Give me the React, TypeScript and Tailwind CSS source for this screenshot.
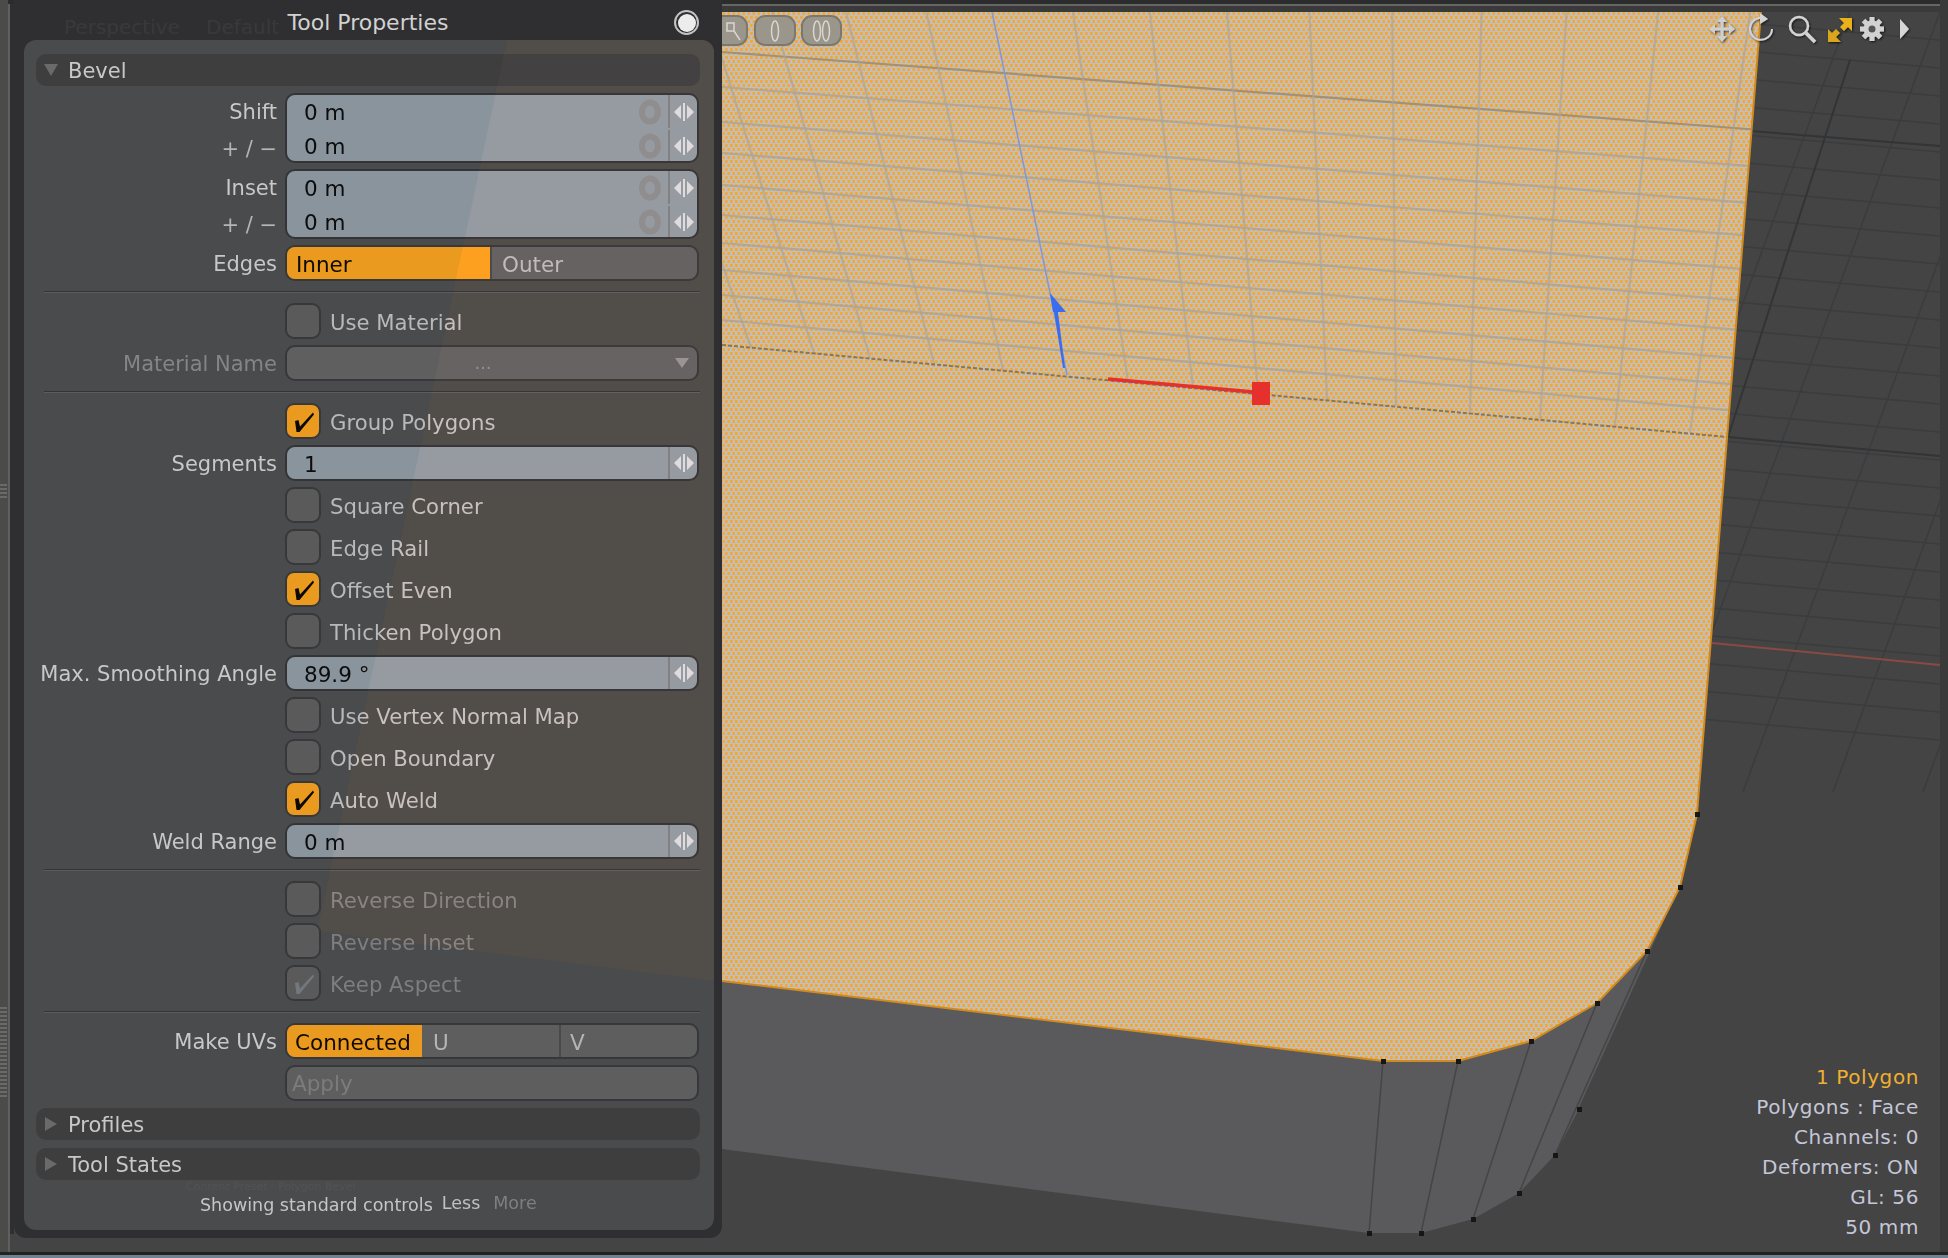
import React from 'react';

const FONT = "font-['DejaVu_Sans',sans-serif]";

const faceEdge =
  '722,12 1761,12 1697,814 1680,887 1647,951 1597,1003 1531,1041 1458,1061 1383,1061 722,981';
const sideFace =
  '722,981 1383,1061 1458,1061 1531,1041 1597,1003 1647,951 1680,887 1579,1109 1555,1155 1519,1193 1473,1219 1421,1233 1369,1233 722,1149';

const faceRows = [87, 122, 153, 185, 215, 243, 270, 295, 320];
const faceCols = [751, 814, 870, 934, 1003, 1128, 1193, 1258, 1327, 1396, 1470, 1540, 1615, 1690];
const sideEdges = [
  [1383, 1061, 1369, 1233],
  [1458, 1061, 1421, 1233],
  [1531, 1041, 1473, 1219],
  [1597, 1003, 1519, 1193],
  [1647, 951, 1555, 1155],
  [1680, 887, 1579, 1109],
];
const verts = [
  [1697, 814], [1680, 887], [1647, 951], [1597, 1003], [1531, 1041], [1458, 1061], [1383, 1061],
  [1579, 1109], [1555, 1155], [1519, 1193], [1473, 1219], [1421, 1233], [1369, 1233],
];
const floorRows = Array.from({ length: 26 }, (_, i) => 40 + i * 28);
const floorCols = [1850, 1940, 2030, 2120, 2210];

const Viewport = () => (
  <svg className="absolute inset-0" width={1948} height={1258} viewBox="0 0 1948 1258">
    <defs>
      <pattern id="dither" width="5" height="8" patternUnits="userSpaceOnUse">
        <rect width="5" height="8" fill="#c2bfba" />
        <rect x="0" y="0" width="2.8" height="3" fill="#f5a733" />
        <rect x="2.5" y="4" width="2.8" height="3" fill="#f5a733" />
      </pattern>
      <clipPath id="faceClip">
        <polygon points={faceEdge} />
      </clipPath>
      <clipPath id="floorClip">
        <rect x="1690" y="12" width="250" height="780" />
      </clipPath>
      <filter id="iconShadow" x="-30%" y="-30%" width="170%" height="170%">
        <feDropShadow dx="1" dy="1" stdDeviation="1" floodColor="#000" floodOpacity="0.75" />
      </filter>
    </defs>

    {/* floor grid */}
    <g clipPath="url(#floorClip)" stroke="#3b3c3e" strokeWidth="1.5">
      {floorRows.map((y) => (
        <line key={y} x1={1690} y1={y - 22} x2={1940} y2={y} />
      ))}
      {floorCols.map((x) => (
        <line key={x} x1={x} y1={12} x2={x - 290} y2={800} />
      ))}
      <line x1={1850} y1={60} x2={1728} y2={437} stroke="#333436" strokeWidth="2" />
      <line x1={1728} y1={437} x2={1940} y2={456} stroke="#333436" strokeWidth="2" />
      <line x1={1750} y1={131} x2={1940} y2={146} stroke="#333436" strokeWidth="2" />
    </g>
    <line x1={1712} y1={643} x2={1940} y2={665} stroke="#8a4a44" strokeWidth="2" />

    {/* object */}
    <polygon points={sideFace} fill="#5a5a5c" />
    {sideEdges.map((e, i) => (
      <line key={i} x1={e[0]} y1={e[1]} x2={e[2]} y2={e[3]} stroke="#454546" strokeWidth="1.5" />
    ))}
    <polygon points={faceEdge} fill="url(#dither)" />
    <g clipPath="url(#faceClip)">
      {faceRows.map((y) => (
        <line
          key={y}
          x1={722}
          y1={y}
          x2={1761}
          y2={y + 1039 * (0.075 + ((y - 52) / 293) * 0.016)}
          stroke="#aaa49a"
          strokeOpacity="0.85"
          strokeWidth="2.2"
        />
      ))}
      <line x1={722} y1={52} x2={1761} y2={130} stroke="#a0927a" strokeWidth="2.2" />
      {faceCols.map((x) => {
        const yb = 345 + (x - 722) * 0.09;
        const tilt = 0.36 - (x - 722) * 0.00052;
        return (
          <line
            key={x}
            x1={x}
            y1={yb}
            x2={x - tilt * (yb - 12)}
            y2={12}
            stroke="#aaa49a"
            strokeOpacity="0.65"
            strokeWidth="2.2"
          />
        );
      })}
      <line x1={722} y1={345} x2={1727} y2={437} stroke="#85775c" strokeWidth="2" strokeDasharray="4 2" />
    </g>
    <polyline
      points="1761,12 1697,814 1680,887 1647,951 1597,1003 1531,1041 1458,1061 1383,1061 722,981"
      fill="none"
      stroke="#cf8a22"
      strokeWidth="2"
    />
    {verts.map((v, i) => (
      <rect key={i} x={v[0] - 2} y={v[1] - 2} width="5" height="5" fill="#161616" />
    ))}

    {/* tool handles */}
    <line x1={992} y1={12} x2={1067} y2={375} stroke="#7d97e0" strokeWidth="1.5" />
    <path d="M1053 305 L1057 305 L1065 368 L1063 368 Z" fill="#3a6cf0" />
    <polygon points="1050,293 1066,312 1053,312" fill="#3a6cf0" />
    <line x1={1108} y1={379} x2={1254} y2={392} stroke="#e6302e" strokeWidth="3.5" />
    <rect x={1252} y={382} width={18} height={23} fill="#e6302e" />

    {/* viewport buttons */}
    <g fill="#9b968c" stroke="#7d786e" strokeWidth="2">
      <rect x={700} y={16} width={47} height={29} rx={10} />
      <rect x={755} y={16} width={40} height={29} rx={10} />
      <rect x={802} y={16} width={39} height={29} rx={10} />
    </g>
    <g fill="none" stroke="#d8d6d0" strokeWidth="1.5">
      <path d="M727 23 l7 0 l0 8 l-7 0 z M734 31 l6 9" />
      <ellipse cx={775} cy={31} rx={3.5} ry={10} />
      <ellipse cx={817} cy={31} rx={3.5} ry={10} />
      <ellipse cx={826} cy={31} rx={3.5} ry={10} />
    </g>

    {/* viewport navigation icons */}
    <g filter="url(#iconShadow)">
      <g fill="#cfcfcf">
        <path d="M1722 16 l5 6 h-10 z M1722 42 l5 -6 h-10 z M1709 29 l6 -5 v10 z M1735 29 l-6 -5 v10 z" />
        <rect x={1720.5} y={20} width={3} height={18} />
        <rect x={1713} y={27.5} width={18} height={3} />
      </g>
      <path d="M1766 19 A11 11 0 1 0 1772 29" fill="none" stroke="#d4d4d4" strokeWidth="2" />
      <path d="M1760 13 l8 6 l-8 5 z" fill="#d4d4d4" />
      <circle cx={1799} cy={26} r={9} fill="none" stroke="#d4d4d4" strokeWidth="2.5" />
      <line x1={1806} y1={33} x2={1815} y2={42} stroke="#d4d4d4" strokeWidth="3.5" />
      <path d="M1852 18 v13 l-4 -4 l-4 4 l-4 -4 l4 -4 l-5 -5 z" fill="#e7b21e" />
      <path d="M1828 42 v-13 l4 4 l4 -4 l4 4 l-4 4 l5 5 z" fill="#d9a51a" />
      <g fill="#d2d2d2">
        <circle cx={1872} cy={29} r={8.5} />
        {[0, 45, 90, 135].map((a) => (
          <rect key={a} x={1869.5} y={17} width={5} height={24} transform={`rotate(${a} 1872 29)`} />
        ))}
      </g>
      <circle cx={1872} cy={29} r={3.5} fill="#555" />
      <path d="M1900 19 l9 10 l-9 10 z" fill="#d6d6d6" />
    </g>
  </svg>
);

const Label = ({ children, dim }: { children?: React.ReactNode; dim?: boolean }) => (
  <div className={`w-[241px] shrink-0 whitespace-nowrap flex justify-end text-[21px] leading-none pt-[3px] ${dim ? 'text-[#858585]' : 'text-[#c8c8c8]'}`}>
    {children}
  </div>
);

const Stepper = () => (
  <svg width="22" height="22" viewBox="0 0 22 22" className="shrink-0">
    <path d="M8 4 v14 l-7 -7 z M14 4 v14 l7 -7 z" fill="#ced2d6" />
    <rect x="10" y="2" width="2" height="18" fill="#ced2d6" />
  </svg>
);

const ResetGlyph = () => (
  <svg width="24" height="26" viewBox="0 0 24 26" className="shrink-0">
    <ellipse cx="12" cy="13" rx="8" ry="9.5" fill="none" stroke="#85878a" strokeWidth="6" />
  </svg>
);

const FieldLine = ({ value, reset, h = 'h-[35px]' }: { value: string; reset?: boolean; h?: string }) => (
  <div className={`flex items-center ${h}`}>
    <span className="flex-1 pl-[17px] pt-[3px] text-[21.5px] leading-none text-[#0c0c0c]">{value}</span>
    {reset && (
      <div className="mr-[6px]">
        <ResetGlyph />
      </div>
    )}
    <div className="w-[29px] h-full flex items-center justify-center border-l-2 border-[#777c80]">
      <Stepper />
    </div>
  </div>
);

const DoubleField = ({ label }: { label: string }) => (
  <div className="flex items-center">
    <div className="w-[241px] shrink-0 flex flex-col text-right text-[21px] leading-none text-[#c8c8c8]">
      <div className="h-[34px] pt-[4px] flex items-center justify-end">{label}</div>
      <div className="h-[36px] pt-[9px] flex items-center justify-end text-[#b4b4b4]">+ / −</div>
    </div>
    <div className="ml-[8px] w-[414px] h-[70px] rounded-[10px] border-2 border-[#343436] bg-[#8a949c] overflow-hidden flex flex-col">
      <FieldLine value="0 m" reset h="h-[33px]" />
      <FieldLine value="0 m" reset h="h-[33px] pt-[2px]" />
    </div>
  </div>
);

const NumberRow = ({ label, value }: { label: string; value: string }) => (
  <div className="flex items-center h-[36px]">
    <Label>{label}</Label>
    <div className="ml-[8px] w-[414px] h-[36px] rounded-[10px] border-2 border-[#343436] bg-[#8a949c] overflow-hidden">
      <FieldLine value={value} h="h-[32px]" />
    </div>
  </div>
);

const CheckRow = ({ label, checked, dim }: { label: string; checked?: boolean; dim?: boolean }) => (
  <div className="flex items-center h-[36px] pl-[249px]">
    <div
      className={`w-[36px] h-[36px] rounded-[9px] border-2 border-[#38383a] flex items-center justify-center ${
        checked && !dim ? 'bg-[#e99a1f]' : 'bg-[#5a5a5a]'
      }`}
    >
      {checked && (
        <svg width="31" height="32" viewBox="0 0 31 32">
          <path
            d="M7 16 L10.5 15 L12 21.5 L25 7.5 L26 9.5 L11.5 27 L8.5 27 Z"
            fill={dim ? '#73787c' : '#0d0a04'}
          />
        </svg>
      )}
    </div>
    <span className={`ml-[9px] pt-[3px] text-[21.2px] leading-none ${dim ? 'text-[#7e7e7e]' : 'text-[#b9b9b9]'}`}>{label}</span>
  </div>
);

const Separator = () => (
  <div className="ml-[8px] my-[10px] h-[2px] bg-[#5c5c5d] border-t border-[#343436]" />
);

const SectionHeader = ({ title, open }: { title: string; open?: boolean }) => (
  <div className="h-[32px] rounded-[10px] bg-[#3e3e3f] flex items-center">
    <svg width="14" height="14" viewBox="0 0 14 14" className="ml-[8px] shrink-0">
      {open ? <path d="M0 1 H14 L7 13 Z" fill="#6a6a6a" /> : <path d="M1 0 V14 L13 7 Z" fill="#6a6a6a" />}
    </svg>
    <span className="ml-[10px] pt-[2px] text-[21px] leading-none text-[#c8c8c8]">{title}</span>
  </div>
);

const WarmFace = ({ overlay }: { overlay?: boolean }) => (
  <svg
    className={`absolute inset-0 pointer-events-none ${overlay ? 'mix-blend-color-dodge' : ''}`}
    width={690}
    height={1190}
    viewBox="0 0 690 1190"
  >
    <polygon points="483,0 690,0 690,941 441,910 293,891" fill={overlay ? '#140a08' : '#4b4a47'} />
  </svg>
);

const ToolPanel = () => (
  <div className="relative w-[708px] h-[1238px] rounded-b-[12px] bg-[#2f2f31] flex flex-col">
    {/* title bar, with the viewport's own header showing faintly through */}
    <div className="relative h-[40px] shrink-0 flex items-center justify-center">
      <span className="absolute left-[50px] top-[17px] text-[20px] leading-none text-[#39393b]">Perspective</span>
      <span className="absolute left-[192px] top-[17px] text-[20px] leading-none text-[#39393b]">Default</span>
      <span className="pt-[5px] text-[22px] leading-none text-[#d2d2d2]">Tool Properties</span>
      <div className="absolute left-[660px] top-[10px] w-[25px] h-[25px] rounded-full border-2 border-[#c4c4c4] bg-[#2f2f31] flex items-center justify-center">
        <div className="w-[18px] h-[18px] rounded-full bg-[#ececec]" />
      </div>
    </div>

    <div className="relative ml-[10px] mr-[8px] h-[1190px] rounded-[12px] bg-[#4a4b4d] overflow-hidden isolate">
      <WarmFace />
      <div className="relative pl-[12px] pr-[14px] pt-[14px] flex flex-col">
        <SectionHeader title="Bevel" open />

        <div className="mt-[7px] flex flex-col gap-[6px]">
          <DoubleField label="Shift" />
          <DoubleField label="Inset" />
          <div className="flex items-center h-[36px]">
            <Label>Edges</Label>
            <div className="ml-[8px] w-[414px] h-[36px] rounded-[10px] border-2 border-[#38383a] bg-[#5e5e5e] overflow-hidden flex text-[21.5px] leading-none">
              <div className="w-[203px] bg-[#e99a1f] text-[#100b02] flex items-center pl-[9px] pt-[3px]">Inner</div>
              <div className="flex-1 border-l-2 border-[#47474a] text-[#b4b4b4] flex items-center pl-[10px] pt-[3px]">Outer</div>
            </div>
          </div>
        </div>

        <Separator />

        <div className="flex flex-col gap-[6px]">
          <CheckRow label="Use Material" />
          <div className="flex items-center h-[36px]">
            <Label dim>Material Name</Label>
            <div className="relative ml-[8px] w-[414px] h-[36px] rounded-[10px] border-2 border-[#38383a] bg-[#5f5f5f] flex items-center justify-center">
              <span className="ml-[-18px] text-[18px] leading-none text-[#8a8a8a]">...</span>
              <svg width="14" height="10" viewBox="0 0 14 10" className="absolute right-[8px] top-[11px]">
                <path d="M0 0 H14 L7 10 Z" fill="#8e8e8e" />
              </svg>
            </div>
          </div>
        </div>

        <Separator />

        <div className="flex flex-col gap-[6px]">
          <CheckRow label="Group Polygons" checked />
          <NumberRow label="Segments" value="1" />
          <CheckRow label="Square Corner" />
          <CheckRow label="Edge Rail" />
          <CheckRow label="Offset Even" checked />
          <CheckRow label="Thicken Polygon" />
          <NumberRow label="Max. Smoothing Angle" value="89.9 °" />
          <CheckRow label="Use Vertex Normal Map" />
          <CheckRow label="Open Boundary" />
          <CheckRow label="Auto Weld" checked />
          <NumberRow label="Weld Range" value="0 m" />
        </div>

        <Separator />

        <div className="flex flex-col gap-[6px]">
          <CheckRow label="Reverse Direction" dim />
          <CheckRow label="Reverse Inset" dim />
          <CheckRow label="Keep Aspect" checked dim />
        </div>

        <Separator />

        <div className="flex flex-col gap-[6px]">
          <div className="flex items-center h-[36px]">
            <Label>Make UVs</Label>
            <div className="ml-[8px] w-[414px] h-[36px] rounded-[10px] border-2 border-[#38383a] bg-[#5e5e5e] overflow-hidden flex text-[21.5px] leading-none text-[#b4b4b4]">
              <div className="w-[135px] bg-[#e99a1f] text-[#100b02] flex items-center pl-[8px] pt-[3px]">Connected</div>
              <div className="w-[139px] border-r-2 border-[#4a4a4c] flex items-center pl-[11px] pt-[3px]">U</div>
              <div className="flex-1 flex items-center pl-[9px] pt-[3px]">V</div>
            </div>
          </div>
          <div className="flex h-[36px] pl-[249px]">
            <div className="w-[414px] rounded-[10px] border-2 border-[#38383a] bg-[#5e5e5e] flex items-center pl-[5px] pt-[2px] text-[21.5px] leading-none text-[#7c7c7c]">
              Apply
            </div>
          </div>
        </div>

        <div className="mt-[7px]">
          <SectionHeader title="Profiles" />
        </div>
        <div className="mt-[8px]">
          <SectionHeader title="Tool States" />
        </div>

        <div className="relative mt-[14px] h-[24px] flex items-center pl-[164px] text-[17.5px] leading-none">
          <span className="absolute left-[150px] top-[-13px] text-[11px] text-[#525355]">Content Preset : Polygon Bevel</span>
          <span className="relative text-[#c6c6c6]">Showing standard controls</span>
          <span className="relative ml-[9px] mt-[-4px] text-[#c0c0c0]">Less</span>
          <span className="relative ml-[13px] mt-[-4px] text-[#7f7f7f]">More</span>
        </div>
      </div>
      <WarmFace overlay />
    </div>
  </div>
);

const stats = ['Polygons : Face', 'Channels: 0', 'Deformers: ON', 'GL: 56', '50 mm'];

const GripTicks = ({ count, className }: { count: number; className: string }) => (
  <div className={`absolute left-0 w-[7px] flex flex-col gap-[2px] ${className}`}>
    {Array.from({ length: count }, (_, i) => (
      <div key={i} className="h-[2px] bg-[#6a6a6a]" />
    ))}
  </div>
);

export default function App() {
  return (
    <div className={`relative w-[1948px] h-[1258px] overflow-hidden bg-[#444444] ${FONT}`}>
      <Viewport />

      {/* window chrome */}
      <div className="absolute left-0 right-0 top-0 h-[12px] flex flex-col">
        <div className="h-[4px] bg-[#2c2c2c]" />
        <div className="h-[2px] bg-[#666666]" />
        <div className="h-[6px] bg-[#3a3a3a]" />
      </div>
      <div className="absolute right-0 top-0 bottom-0 w-[8px] bg-[#3a3a3a]" />
      <div className="absolute left-0 right-0 bottom-0 flex flex-col">
        <div className="h-[3px] bg-[#222222]" />
        <div className="h-[3px] bg-[#6e8290]" />
      </div>

      <div className="relative flex items-start">
        <div className="relative w-[14px] h-[1252px] shrink-0 flex">
          <div className="w-[8px] bg-[#4b4b49]" />
          <div className="w-[2px] mt-[4px] bg-[#5f5f5f]" />
          <div className="flex-1 mt-[4px] mb-[18px] bg-[#2f2f31]" />
          <GripTicks count={4} className="top-[484px]" />
          <GripTicks count={23} className="top-[1007px]" />
        </div>
        <ToolPanel />
      </div>

      {/* viewport readout */}
      <div className="absolute right-[29px] top-[1062px] flex flex-col items-end text-[20px] leading-[30px] tracking-[0.6px] text-[#c4c7d8]">
        <span className="text-[#f0b030]">1 Polygon</span>
        {stats.map((s) => (
          <span key={s}>{s}</span>
        ))}
      </div>
    </div>
  );
}
